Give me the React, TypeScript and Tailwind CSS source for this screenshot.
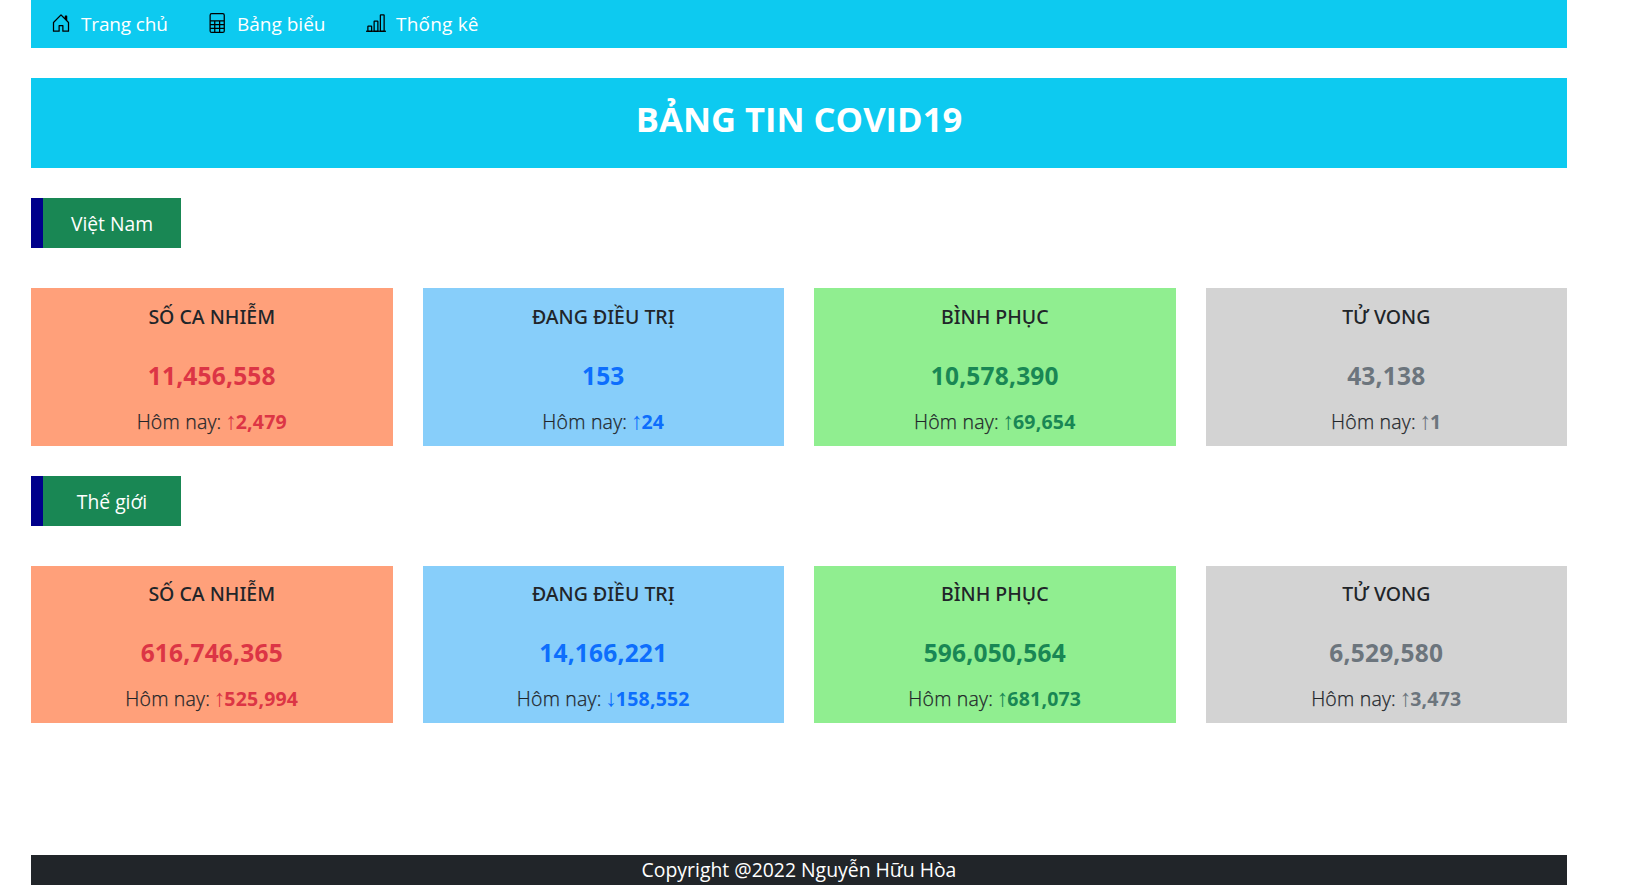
import React from "react";
import { BsHouseDoor } from "react-icons/bs";

type Stat = {
  title: string;
  total: string;
  arrow: string;
  today: string;
  card: string;
  accent: string;
};

const vietnam: Stat[] = [
  { title: "SỐ CA NHIỄM", total: "11,456,558", arrow: "↑", today: "2,479", card: "bg-[#ffa07a]", accent: "text-[#dc3545]" },
  { title: "ĐANG ĐIỀU TRỊ", total: "153", arrow: "↑", today: "24", card: "bg-[#87cefa]", accent: "text-[#0d6efd]" },
  { title: "BÌNH PHỤC", total: "10,578,390", arrow: "↑", today: "69,654", card: "bg-[#90ee90]", accent: "text-[#198754]" },
  { title: "TỬ VONG", total: "43,138", arrow: "↑", today: "1", card: "bg-[#d3d3d3]", accent: "text-[#6c757d]" },
];

const world: Stat[] = [
  { title: "SỐ CA NHIỄM", total: "616,746,365", arrow: "↑", today: "525,994", card: "bg-[#ffa07a]", accent: "text-[#dc3545]" },
  { title: "ĐANG ĐIỀU TRỊ", total: "14,166,221", arrow: "↓", today: "158,552", card: "bg-[#87cefa]", accent: "text-[#0d6efd]" },
  { title: "BÌNH PHỤC", total: "596,050,564", arrow: "↑", today: "681,073", card: "bg-[#90ee90]", accent: "text-[#198754]" },
  { title: "TỬ VONG", total: "6,529,580", arrow: "↑", today: "3,473", card: "bg-[#d3d3d3]", accent: "text-[#6c757d]" },
];

function CalculatorIcon() {
  return (
    <svg width="20" height="20" viewBox="0 0 16 16" fill="none" stroke="currentColor">
      <rect x="2.5" y="0.5" width="11.3" height="15" rx="1.2" />
      <path d="M2.5 6.2h11.3M2.5 9.2h11.3M2.5 12.2h11.3M6.2 6.2v9.3M10.1 6.2v9.3" />
    </svg>
  );
}

function ChartIcon() {
  return (
    <svg width="20" height="20" viewBox="0 0 16 16" fill="none" stroke="currentColor">
      <path d="M0 14.6h16" />
      <rect x="1.5" y="10.5" width="3" height="4.1" rx="0.3" />
      <rect x="6.5" y="6.5" width="3" height="8.1" rx="0.3" />
      <rect x="11.5" y="1.5" width="3" height="13.1" rx="0.3" />
    </svg>
  );
}

function NavItem({ icon, label, className }: { icon: React.ReactNode; label: string; className: string }) {
  return (
    <a href="#" className={`flex items-center ${className}`}>
      <span className="mr-2.5 pb-0.5 text-black">{icon}</span>
      <span>{label}</span>
    </a>
  );
}

function Region({ name, stats, className }: { name: string; stats: Stat[]; className: string }) {
  return (
    <section>
      <h2 className="mt-[30px] flex h-[50px] w-[150px] items-center justify-center border-l-12 border-[#00008b] bg-[#198754] pt-[3px] text-[19.3px] text-white">
        {name}
      </h2>
      <div className={`mt-10 grid grid-cols-4 gap-[30px] ${className}`}>
        {stats.map((s) => (
          <div key={s.title} className={`flex flex-col items-center ${s.card}`}>
            <h3 className="h-[30px] font-['Noto_Sans',sans-serif] text-[19.5px] leading-[30px] font-medium">{s.title}</h3>
            <p className={`mt-6 h-10 text-[24.5px] leading-10 font-bold tracking-[0.2px] ${s.accent}`}>{s.total}</p>
            <p className="mt-[11px] h-[30px] text-[19.5px] leading-[30px] font-light tracking-[0.2px] [-webkit-text-stroke:0.25px]">
              Hôm nay:{" "}
              <span className={`font-bold [-webkit-text-stroke:0px] ${s.accent}`}>
                <span className="-mx-[1.5px] font-['Liberation_Sans',sans-serif] text-[24px] leading-none font-normal tracking-normal">
                  {s.arrow}
                </span>
                {s.today}
              </span>
            </p>
          </div>
        ))}
      </div>
    </section>
  );
}

export default function App() {
  return (
    <div className="ml-[31px] flex h-[885px] w-[1536px] flex-col font-['Open_Sans','Noto_Sans',sans-serif] text-[19px] text-[#212529]">
      <nav className="flex h-12 items-center bg-[#0dcaf0] pl-5 text-white">
        <NavItem icon={<BsHouseDoor size={20} />} label="Trang chủ" className="w-[156px] tracking-[-0.15px]" />
        <NavItem icon={<CalculatorIcon />} label="Bảng biểu" className="w-[159px]" />
        <NavItem icon={<ChartIcon />} label="Thống kê" className="tracking-[0.2px]" />
      </nav>
      <h1 className="mt-[30px] flex h-[90px] justify-center bg-[#0dcaf0] pt-[15px] text-[34.6px] leading-[51px] font-bold text-white">
        BẢNG TIN COVID19
      </h1>
      <Region name="Việt Nam" stats={vietnam} className="h-[158px] *:pt-3.5" />
      <Region name="Thế giới" stats={world} className="h-[157px] *:pt-[13px]" />
      <footer className="mt-auto h-[30px] bg-[#212529] text-center text-[19.4px] leading-[30px] text-white">
        Copyright @2022 Nguyễn Hữu Hòa
      </footer>
    </div>
  );
}
